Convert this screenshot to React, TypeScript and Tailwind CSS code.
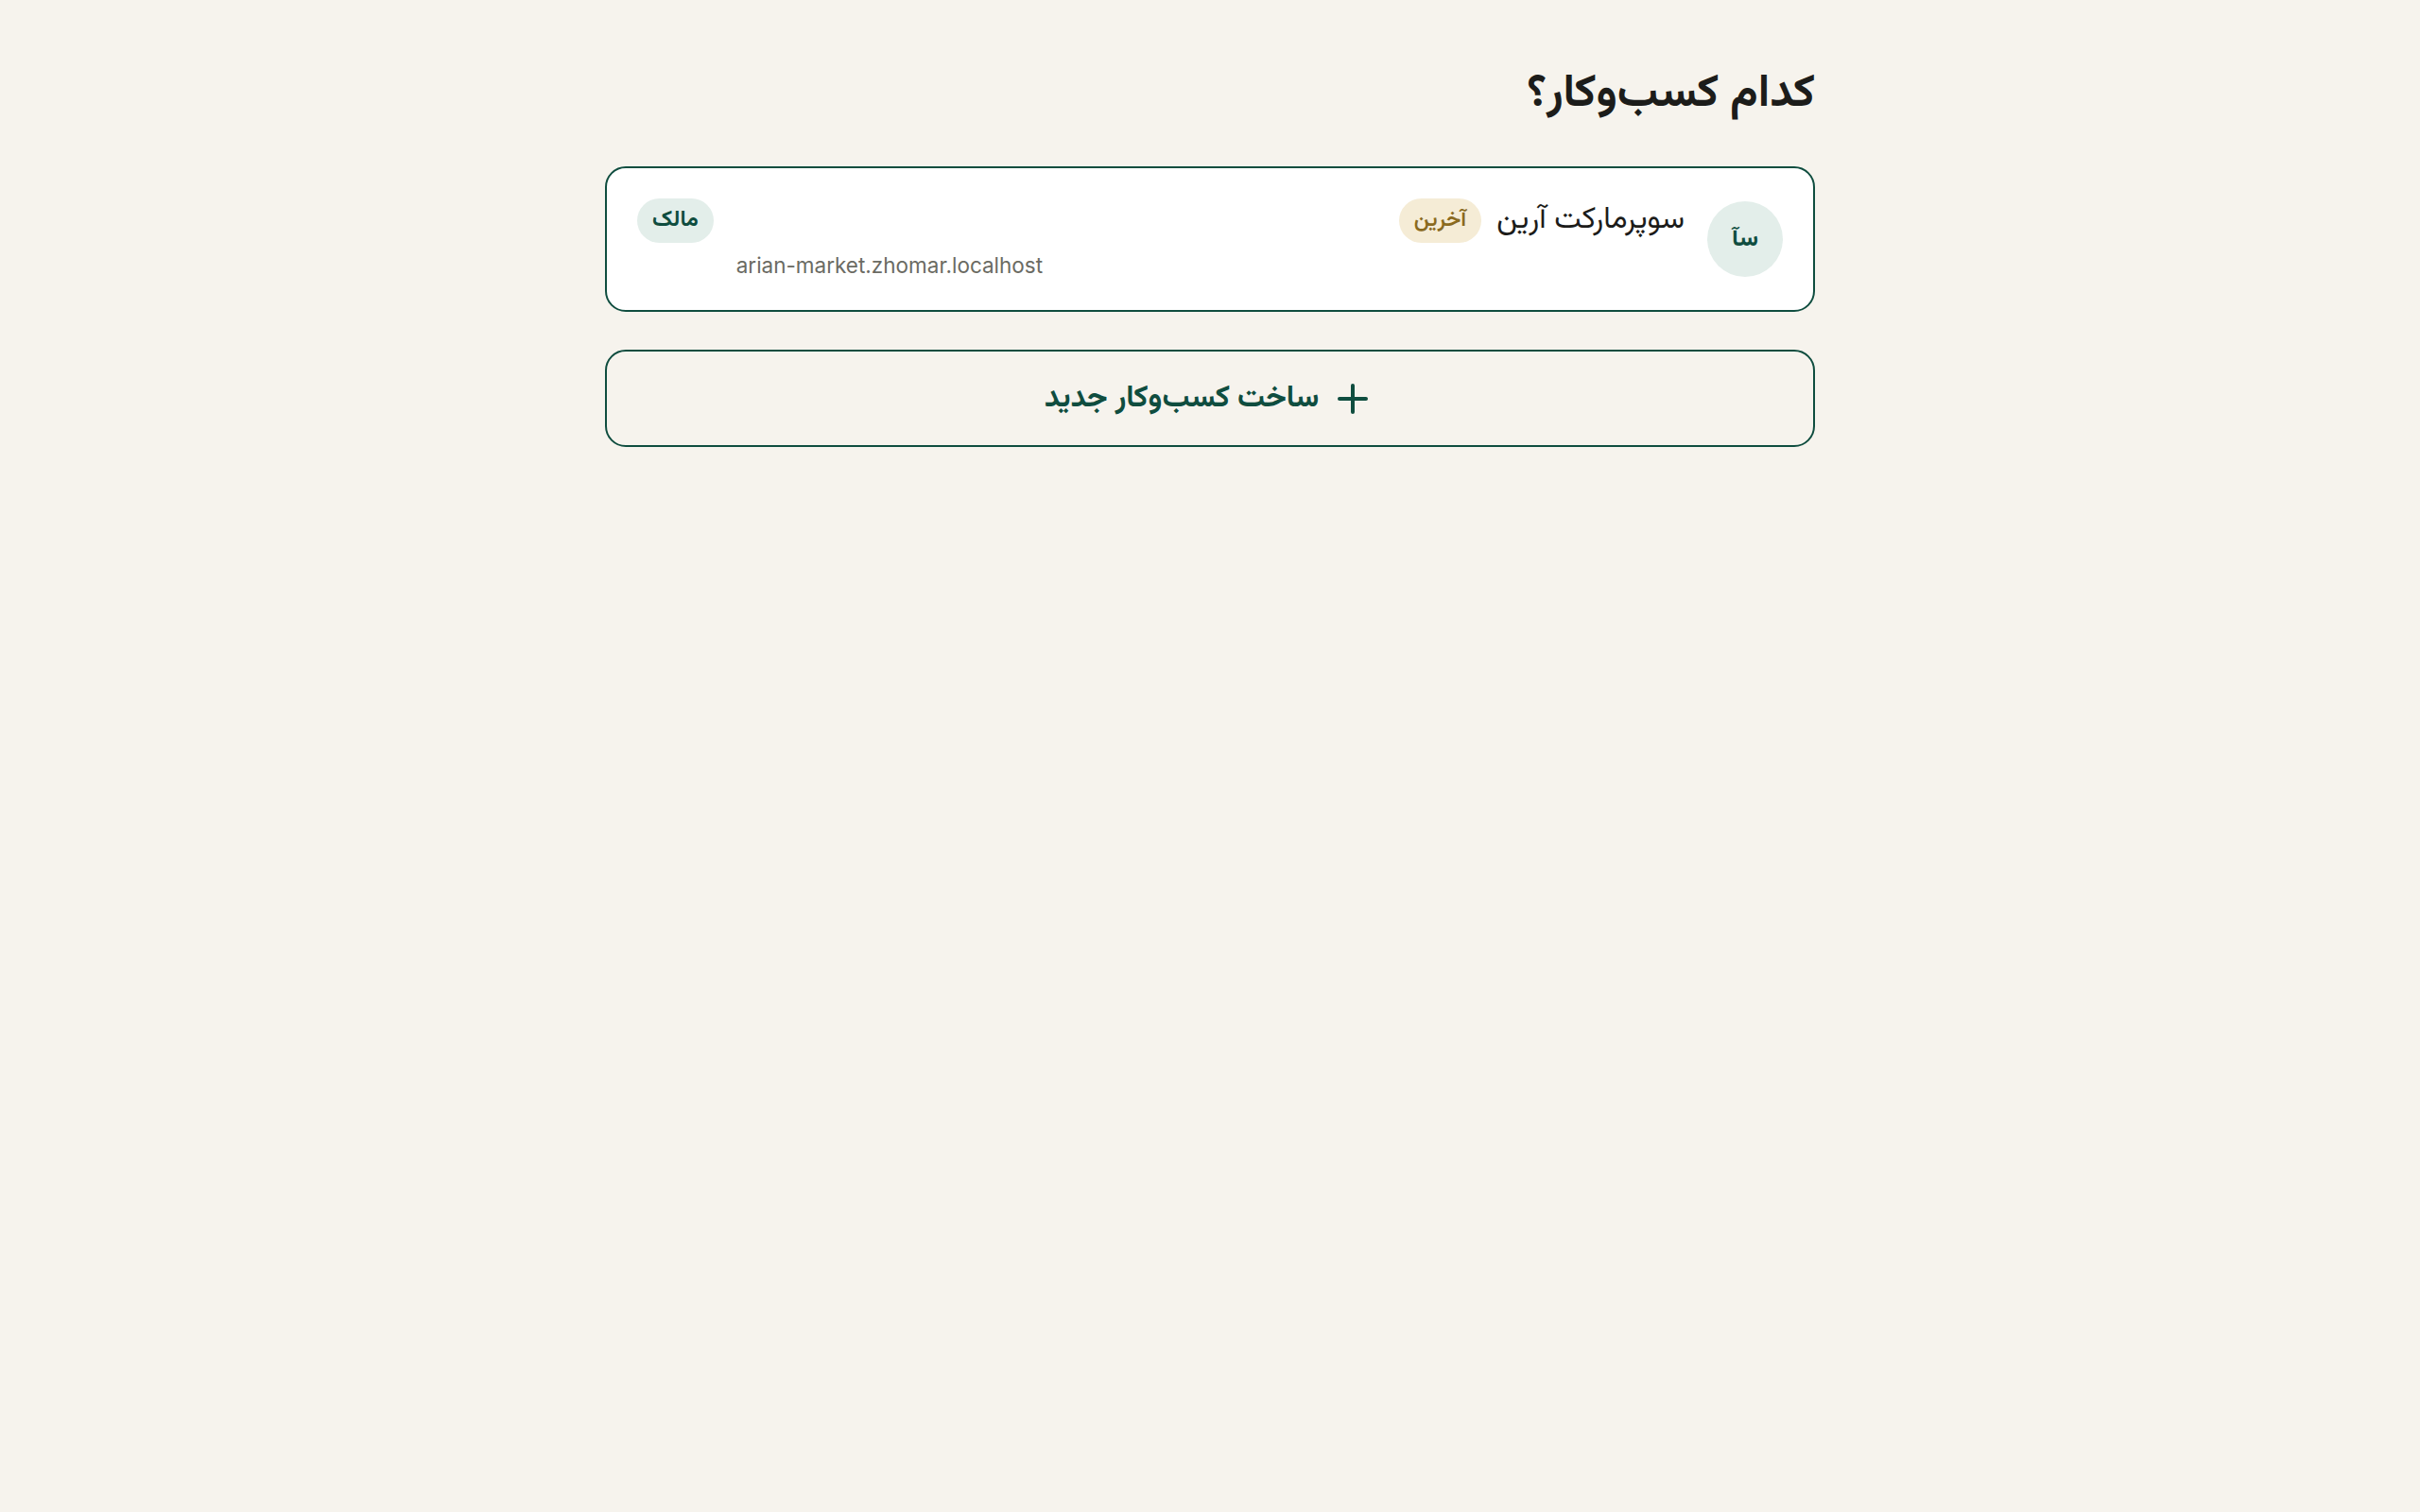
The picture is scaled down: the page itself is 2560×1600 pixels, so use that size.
import React from "react";
import { Plus } from "lucide-react";

const fa = { fontFamily: '"Vazirmatn", "Noto Sans Arabic", "DejaVu Sans", sans-serif' };

export default function App() {
  return (
    <div dir="rtl" className="min-h-screen bg-[#f6f3ed]" style={fa}>
      <div className="mx-auto max-w-[1280px] pt-[65px]">
        <h1 className="text-[48px] font-bold leading-[72px] text-[#1c1c1a]">کدام کسب‌وکار؟</h1>
        <div className="mt-[39px] flex items-center gap-6 rounded-[22px] border-2 border-[#0f4d3f] bg-white px-8 py-8">
          <div className="flex h-20 w-20 shrink-0 items-center justify-center rounded-full bg-[#e3eeea] text-[26px] font-bold text-[#0f4d3f]">
            سآ
          </div>
          <div className="flex flex-1 flex-col">
            <div className="flex items-center gap-4">
              <span className="text-[32px] font-normal leading-[47px] text-[#1c1c1a]">سوپرمارکت آرین</span>
              <span className="flex h-[47px] items-center rounded-full bg-[#f5ecd6] px-4 text-[23px] font-semibold text-[#8a6a1e]">
                آخرین
              </span>
            </div>
            <div dir="ltr" className="mt-[9px] text-left text-[22.5px] leading-[30px] text-[#6b6b63]" style={{ fontFamily: '"Inter", sans-serif' }}>
              arian-market.zhomar.localhost
            </div>
          </div>
          <span className="flex h-[47px] items-center self-start rounded-full bg-[#e3eeea] px-4 text-[23.5px] font-bold text-[#0f4d3f]">
            مالک
          </span>
        </div>
        <button className="mt-[40px] flex h-[103px] w-full items-center justify-center gap-3 rounded-[22px] border-2 border-[#0f4d3f] text-[32px] font-bold text-[#0f4d3f]" style={fa}>
          <Plus size={48} strokeWidth={2} />
          <span>ساخت کسب‌وکار جدید</span>
        </button>
      </div>
    </div>
  );
}
